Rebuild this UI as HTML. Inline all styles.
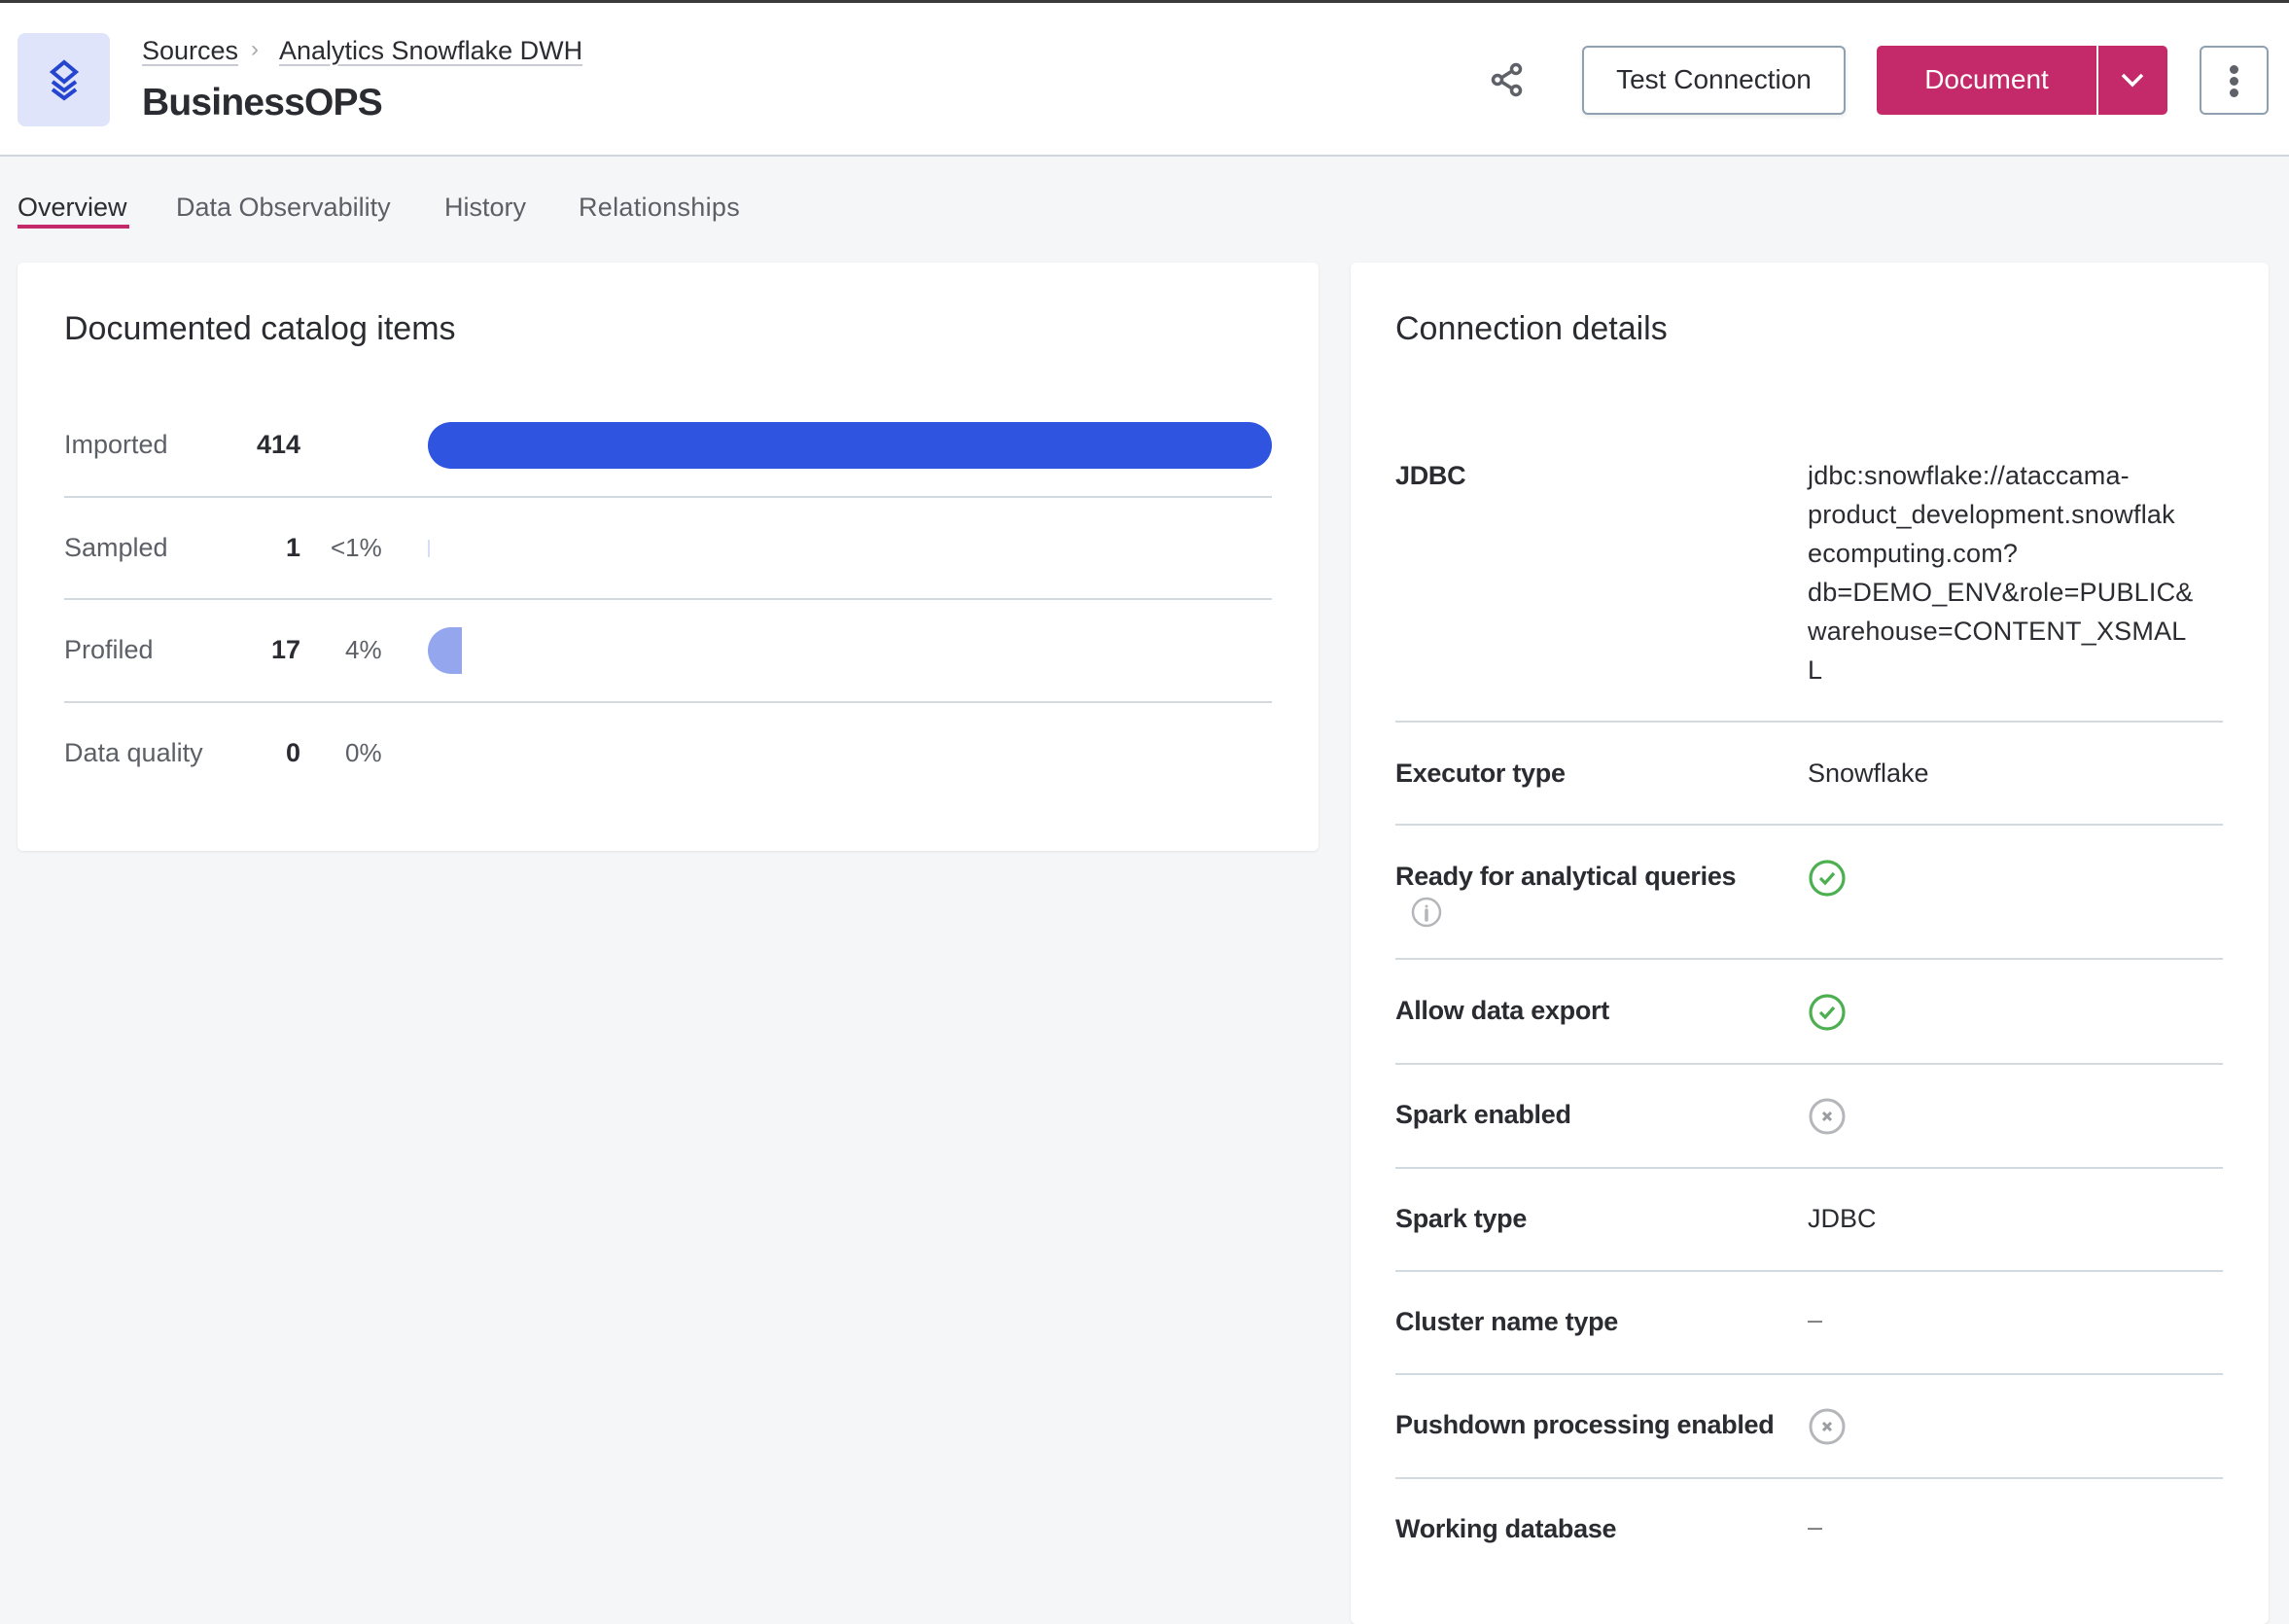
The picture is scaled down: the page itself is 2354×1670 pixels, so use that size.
<!DOCTYPE html>
<html><head><meta charset="utf-8"><style>
*{margin:0;padding:0;box-sizing:border-box}
body{width:2354px;height:1616px;background:#f5f6f8;font-family:"Liberation Sans",sans-serif;color:#2b2c31;position:relative;overflow:hidden}
.abs{position:absolute}
.hdr{left:0;top:0;width:2354px;height:161px;background:#fff;border-top:3px solid #3a3a3a;border-bottom:2px solid #cfd6dd}
.t{position:absolute;white-space:nowrap;line-height:1}
.card{background:#fff;border-radius:6px;box-shadow:0 1px 3px rgba(0,0,0,.08)}
.sep{position:absolute;height:2px;background:#d3dadf}
.lbl{font-size:27px;color:#5c5f66}
.num{font-size:27px;font-weight:bold;color:#2b2c31}
.rl{font-size:27px;font-weight:bold;color:#2b2c31;left:1435px;letter-spacing:-0.3px}
.rv{font-size:27px;color:#2b2c31;left:1859px}
</style></head><body>
<div class="abs hdr"></div>
<div class="abs" style="left:18px;top:34px;width:95px;height:96px;background:#dfe4fa;border-radius:8px"></div>
<svg class="abs" style="left:46px;top:60px" width="40" height="46" viewBox="0 0 40 46" fill="none" stroke="#2445d0" stroke-width="4" stroke-linejoin="miter">
<path d="M20 4 L32 14 L20 24 L8 14 Z"/><path d="M8 24 L20 33 L32 24"/><path d="M8 32 L20 41 L32 32"/></svg>
<div class="t" style="left:146px;top:39px;font-size:27px;color:#2b2c31;text-decoration:underline;text-decoration-color:#c9ccd3;text-underline-offset:5px">Sources</div>
<div class="t" style="left:258px;top:39px;font-size:24px;color:#aaa">›</div>
<div class="t" style="left:287px;top:39px;font-size:27px;color:#2b2c31;text-decoration:underline;text-decoration-color:#c9ccd3;text-underline-offset:5px">Analytics Snowflake DWH</div>
<div class="t" style="left:146px;top:86px;font-size:39px;font-weight:bold;color:#2b2c31;letter-spacing:-0.8px">BusinessOPS</div>
<svg class="abs" style="left:1533px;top:64px" width="34" height="36" viewBox="0 0 34 36" fill="none" stroke="#5f6168" stroke-width="3.5"><circle cx="26" cy="7" r="4.5"/><circle cx="7" cy="18" r="4.5"/><circle cx="26" cy="29" r="4.5"/><path d="M11 16 L22 9 M11 20 L22 27"/></svg>
<div class="abs" style="left:1627px;top:47px;width:271px;height:71px;border:2px solid #8fa0b0;border-radius:6px;background:#fff;box-shadow:0 2px 5px rgba(0,0,0,.08)"></div>
<div class="t" style="left:1627px;width:271px;text-align:center;top:68px;font-size:28px;color:#2b2c31">Test Connection</div>
<div class="abs" style="left:1930px;top:47px;width:299px;height:71px;background:#c42a6a;border-radius:5px"></div>
<div class="abs" style="left:2156px;top:47px;width:2px;height:71px;background:#fff"></div>
<div class="t" style="left:1930px;width:226px;text-align:center;top:68px;font-size:28px;color:#fff">Document</div>
<svg class="abs" style="left:2179px;top:72px" width="28" height="20" viewBox="0 0 28 20" fill="none" stroke="#fff" stroke-width="3.5"><path d="M4 5 L14 15 L24 5"/></svg>
<div class="abs" style="left:2262px;top:47px;width:71px;height:71px;border:2px solid #8fa0b0;border-radius:6px;background:#fff"></div>
<div class="abs" style="left:2293px;top:67px;width:9px;height:9px;border-radius:50%;background:#5f6168"></div>
<div class="abs" style="left:2293px;top:79px;width:9px;height:9px;border-radius:50%;background:#5f6168"></div>
<div class="abs" style="left:2293px;top:91px;width:9px;height:9px;border-radius:50%;background:#5f6168"></div>

<div class="t" style="left:18px;top:200px;font-size:27px;color:#2b2c31">Overview</div>
<div class="abs" style="left:18px;top:231px;width:115px;height:4px;background:#c42a6a"></div>
<div class="t" style="left:181px;top:200px;font-size:27px;color:#5c5f66">Data Observability</div>
<div class="t" style="left:457px;top:200px;font-size:27px;color:#5c5f66">History</div>
<div class="t" style="left:595px;top:200px;font-size:27px;color:#5c5f66;letter-spacing:0.3px">Relationships</div>

<div class="abs card" style="left:18px;top:270px;width:1338px;height:605px"></div>
<div class="t" style="left:66px;top:321px;font-size:34px;color:#2b2c31">Documented catalog items</div>
<div class="t lbl" style="left:66px;top:444px">Imported</div>
<div class="t num" style="left:200px;width:109px;text-align:right;top:444px">414</div>
<div class="abs" style="left:440px;top:434px;width:868px;height:48px;border-radius:24px;background:#2f55e0"></div>
<div class="sep" style="left:66px;top:510px;width:1242px"></div>
<div class="t lbl" style="left:66px;top:550px">Sampled</div>
<div class="t num" style="left:200px;width:109px;text-align:right;top:550px">1</div>
<div class="t lbl" style="left:340px;top:550px;font-size:26px">&lt;1%</div>
<div class="abs" style="left:440px;top:555px;width:2px;height:18px;background:#d8defa"></div>
<div class="sep" style="left:66px;top:615px;width:1242px"></div>
<div class="t lbl" style="left:66px;top:655px">Profiled</div>
<div class="t num" style="left:200px;width:109px;text-align:right;top:655px">17</div>
<div class="t lbl" style="left:355px;top:655px;font-size:26px">4%</div>
<div class="abs" style="left:440px;top:645px;width:35px;height:48px;border-radius:24px 0 0 24px;background:#93a6ee"></div>
<div class="sep" style="left:66px;top:721px;width:1242px"></div>
<div class="t lbl" style="left:66px;top:761px">Data quality</div>
<div class="t num" style="left:200px;width:109px;text-align:right;top:761px">0</div>
<div class="t lbl" style="left:355px;top:761px;font-size:26px">0%</div>

<div class="abs card" style="left:1389px;top:270px;width:944px;height:1400px"></div>
<div class="t" style="left:1435px;top:321px;font-size:34px;color:#2b2c31">Connection details</div>
<div class="t rl" style="top:476px">JDBC</div>
<div class="abs rv" style="top:469px;font-size:27px;line-height:40px;white-space:nowrap;letter-spacing:0.2px">jdbc:snowflake://ataccama-<br>product_development.snowflak<br>ecomputing.com?<br>db=DEMO_ENV&amp;role=PUBLIC&amp;<br>warehouse=CONTENT_XSMAL<br>L</div>
<div class="sep" style="left:1435px;top:741px;width:851px"></div>
<div class="t rl" style="top:782px">Executor type</div>
<div class="t rv" style="top:782px">Snowflake</div>
<div class="sep" style="left:1435px;top:847px;width:851px"></div>
<div class="t rl" style="top:888px">Ready for analytical queries</div>
<svg class="abs" style="left:1450px;top:921px" width="34" height="34" viewBox="0 0 34 34" fill="none" stroke="#b4b6ba" stroke-width="2.5"><circle cx="17" cy="17" r="14"/><circle cx="17" cy="11" r="1.5" fill="#b4b6ba" stroke="none"/><path d="M17 15 V25" stroke-width="3.5" stroke-linecap="round"/></svg>
<svg class="abs" style="left:1859px;top:883px" width="40" height="40" viewBox="0 0 40 40" fill="none" stroke="#4caf50" stroke-width="3.2"><circle cx="20" cy="20" r="17"/><path d="M13 20 L18 25 L27 15"/></svg>
<div class="sep" style="left:1435px;top:985px;width:851px"></div>
<div class="t rl" style="top:1026px">Allow data export</div>
<svg class="abs" style="left:1859px;top:1021px" width="40" height="40" viewBox="0 0 40 40" fill="none" stroke="#4caf50" stroke-width="3.2"><circle cx="20" cy="20" r="17"/><path d="M13 20 L18 25 L27 15"/></svg>
<div class="sep" style="left:1435px;top:1093px;width:851px"></div>
<div class="t rl" style="top:1133px">Spark enabled</div>
<svg class="abs" style="left:1859px;top:1128px" width="40" height="40" viewBox="0 0 40 40" fill="none" stroke="#b4b6ba" stroke-width="3"><circle cx="20" cy="20" r="17"/><path d="M16 16 L24 24 M24 16 L16 24" stroke="#9a9ca0"/></svg>
<div class="sep" style="left:1435px;top:1200px;width:851px"></div>
<div class="t rl" style="top:1240px">Spark type</div>
<div class="t rv" style="top:1240px">JDBC</div>
<div class="sep" style="left:1435px;top:1306px;width:851px"></div>
<div class="t rl" style="top:1346px">Cluster name type</div>
<div class="t rv" style="top:1344px;color:#777">–</div>
<div class="sep" style="left:1435px;top:1412px;width:851px"></div>
<div class="t rl" style="top:1452px">Pushdown processing enabled</div>
<svg class="abs" style="left:1859px;top:1447px" width="40" height="40" viewBox="0 0 40 40" fill="none" stroke="#b4b6ba" stroke-width="3"><circle cx="20" cy="20" r="17"/><path d="M16 16 L24 24 M24 16 L16 24" stroke="#9a9ca0"/></svg>
<div class="sep" style="left:1435px;top:1519px;width:851px"></div>
<div class="t rl" style="top:1559px">Working database</div>
<div class="t rv" style="top:1557px;color:#777">–</div>
</body></html>
